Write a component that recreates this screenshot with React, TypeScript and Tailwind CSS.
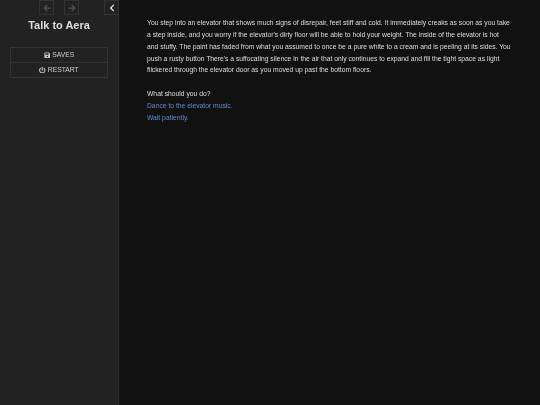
import React from 'react';
import { FaArrowLeft, FaArrowRight, FaChevronLeft, FaPowerOff, FaSave } from 'react-icons/fa';

export default function App() {
  return (
    <div className="flex h-[405px] w-[540px] overflow-hidden bg-[#111] font-['Liberation_Sans',sans-serif] text-[#ddd]">
      {/* Sidebar */}
      <aside className="relative w-[119px] shrink-0 border-r border-[#333] bg-[#222]">
        <div className="flex justify-center gap-[10px] px-[1px]">
          <button className="flex h-[15px] w-[15px] items-center justify-center border border-[#333] text-[#555]">
            <FaArrowLeft className="h-[8px] w-[8px]" />
          </button>
          <button className="flex h-[15px] w-[15px] items-center justify-center border border-[#333] text-[#555]">
            <FaArrowRight className="h-[8px] w-[8px]" />
          </button>
        </div>
        <button className="absolute right-0 top-0 flex h-[15px] w-[14px] items-center justify-center border border-r-0 border-[#333] bg-[#222] text-[#eee]">
          <FaChevronLeft className="h-[8px] w-[8px]" />
        </button>
        <h1 className="mt-[1px] transform-gpu text-center text-[11px] font-bold leading-[19px] text-[#ddd]">Talk to Aera</h1>
        <nav className="mx-[10px] mt-[12px] border border-[#333] text-[6.75px] text-[#ccc]">
          <div className="flex h-[14.5px] transform-gpu items-center justify-center gap-[2px] border-b border-[#333]">
            <FaSave className="h-[6.5px] w-[6.5px]" />
            <span>SAVES</span>
          </div>
          <div className="flex h-[14.5px] transform-gpu items-center justify-center gap-[2px]">
            <FaPowerOff className="h-[6.5px] w-[6.5px]" />
            <span>RESTART</span>
          </div>
        </nav>
      </aside>

      {/* Passage */}
      <main className="flex-1 pl-[28px] pr-[28px] pt-[17px] text-[6.75px] leading-[11.85px]">
        <div className="transform-gpu">
          <p>
            You step into an elevator that shows much signs of disrepair, feet stiff and cold. It immediately creaks as soon as you take a step inside, and you worry if the elevator's dirty floor will be able to hold your weight. The inside of the elevator is hot and stuffy. The paint has faded from what you assumed to once be a pure white to a cream and is peeling at its sides. You push a rusty button There's a suffocating silence in the air that only continues to expand and fill the tight space as light flickered through the elevator door as you moved up past the bottom floors.
          </p>
          <p className="mt-[11.85px]">What should you do?</p>
          <p className="text-[#68c]">Dance to the elevator music.</p>
          <p className="text-[#68c]">Wait patiently.</p>
        </div>
      </main>
    </div>
  );
}
